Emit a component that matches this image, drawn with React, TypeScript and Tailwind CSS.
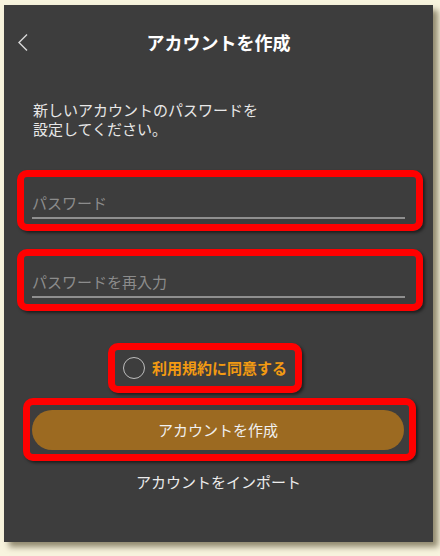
import React from "react";

const font = { fontFamily: '"Noto Sans CJK JP", "Noto Sans", sans-serif' };

export default function App() {
  return (
    <div className="w-[440px] h-[556px] bg-[#f8f4de] pl-[4px] pt-[5px] overflow-hidden" style={font}>
      <div className="w-[429px] h-[537px] bg-[#3d3d3d] shadow-[5px_5px_6px_rgba(60,50,20,0.55)] flex flex-col">
        {/* Header */}
        <div className="relative h-[74px] flex items-center justify-center">
          <svg className="absolute left-[13px] top-[28px]" width="12" height="19" viewBox="0 0 12 19" fill="none">
            <path d="M10 1.5 L2 9.5 L10 17.5" stroke="#d8d8d8" strokeWidth="1.4" />
          </svg>
          <span className="text-[18px] font-bold text-white leading-[24px]">アカウントを作成</span>
        </div>

        {/* Description */}
        <div className="mt-[21px] pl-[29px] text-[15px] leading-[19px] text-[#e8e8e8]">
          <div>新しいアカウントのパスワードを</div>
          <div>設定してください。</div>
        </div>

        {/* Password field */}
        <div className="mt-[32px] ml-[13px] mr-[10px] h-[61px] border-[7px] border-[#ff0000] rounded-[10px] shadow-[2px_2px_3px_rgba(0,0,0,0.5)] pl-[8px] pr-[11px] pt-[16px]">
          <div className="text-[15px] leading-[20px] text-[#8c8c8c]">パスワード</div>
          <div className="mt-[4px] h-[2px] bg-[#8f8f8f]" />
        </div>

        {/* Confirm password field */}
        <div className="mt-[18px] ml-[13px] mr-[10px] h-[62px] border-[7px] border-[#ff0000] rounded-[10px] shadow-[2px_2px_3px_rgba(0,0,0,0.5)] pl-[8px] pr-[11px] pt-[16px]">
          <div className="text-[15px] leading-[20px] text-[#8c8c8c]">パスワードを再入力</div>
          <div className="mt-[4px] h-[2px] bg-[#8f8f8f]" />
        </div>

        {/* Terms checkbox */}
        <div className="mt-[32px] ml-[104px] w-[194px] h-[50px] border-[7px] border-[#ff0000] rounded-[10px] shadow-[2px_2px_3px_rgba(0,0,0,0.5)] flex items-center pl-[8px] gap-[7px]">
          <div className="w-[22px] h-[22px] rounded-full border-[1.5px] border-[#bdbdbd] shrink-0" />
          <span className="text-[15px] font-bold text-[#f29a12] leading-[20px] whitespace-nowrap">利用規約に同意する</span>
        </div>

        {/* Create button */}
        <div className="mt-[5px] ml-[19px] w-[393px] h-[63px] border-[7px] border-[#ff0000] rounded-[10px] shadow-[2px_2px_3px_rgba(0,0,0,0.5)] pl-[2px] pr-[5px] pt-[5px]">
          <div className="h-[40px] rounded-full bg-[#9c6a21] flex items-center justify-center text-[15px] text-[#f0f0f0]">
            アカウントを作成
          </div>
        </div>

        {/* Import */}
        <div className="mt-[11px] text-center text-[15px] leading-[20px] text-[#ececec]">
          アカウントをインポート
        </div>
      </div>
    </div>
  );
}
